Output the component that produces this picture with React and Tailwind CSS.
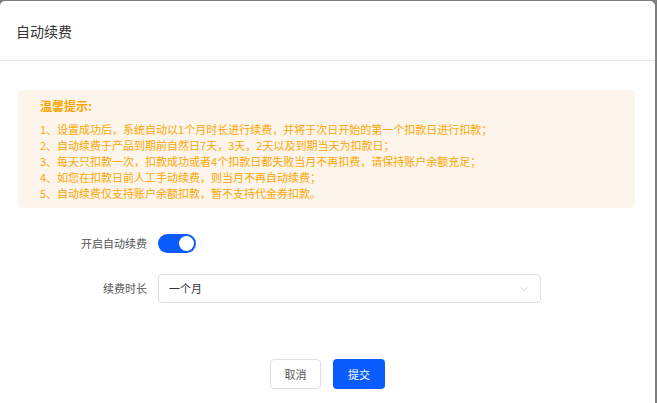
import React, { useState } from 'react';
import { ChevronDown } from 'lucide-react';

const tips = [
  '1、设置成功后，系统自动以1个月时长进行续费，并将于次日开始的第一个扣款日进行扣款；',
  '2、自动续费于产品到期前自然日7天，3天，2天以及到期当天为扣款日；',
  '3、每天只扣款一次，扣款成功或者4个扣款日都失败当月不再扣费，请保持账户余额充足；',
  '4、如您在扣款日前人工手动续费，则当月不再自动续费；',
  '5、自动续费仅支持账户余额扣款，暂不支持代金券扣款。',
];

export default function App() {
  const [enabled, setEnabled] = useState(true);

  return (
    <div
      className="w-[657px] h-[403px] bg-[#7f7f7f] pt-px pr-[2px] flex overflow-hidden"
      style={{ fontFamily: '"Noto Sans CJK SC", "Noto Sans", sans-serif' }}
    >
      <div className="flex-1 bg-white rounded-t-[5px] flex flex-col">
        <div className="h-[60px] border-b border-[#e6e6e6] flex items-center px-4">
          <h2 className="text-[14px] text-[#333] leading-none">自动续费</h2>
        </div>

        <div className="mt-[29px] ml-[18px] mr-[20px] bg-[#fdf5eb] rounded-[4px] pl-[22px] pt-[8px] pb-[7px] text-[#fba604]">
          <div className="text-[12px] font-bold leading-[16px] mb-[7px]">温馨提示:</div>
          {tips.map((t, i) => (
            <p key={i} className="text-[11px] leading-[16px] whitespace-nowrap">{t}</p>
          ))}
        </div>

        <div className="mt-[25px] flex items-center h-[20px]">
          <div className="w-[147px] text-right text-[11px] text-[#555]">开启自动续费</div>
          <button
            onClick={() => setEnabled(!enabled)}
            className={`ml-[11px] w-[38px] h-[19px] rounded-full flex items-center px-[2px] ${enabled ? 'bg-[#0a5cff] justify-end' : 'bg-[#dcdfe6] justify-start'}`}
          >
            <span className="w-[15px] h-[15px] rounded-full bg-white block" />
          </button>
        </div>

        <div className="mt-[21px] flex items-center">
          <div className="w-[147px] text-right text-[11px] text-[#555]">续费时长</div>
          <div className="ml-[11px] w-[383px] h-[29px] border border-[#dcdfe6] rounded-[4px] flex items-center justify-between pl-[10px] pr-[10px]">
            <span className="text-[11px] text-[#333]">一个月</span>
            <ChevronDown className="w-[12px] h-[12px] text-[#c0c4cc]" strokeWidth={1.5} />
          </div>
        </div>

        <div className="mt-[56px] flex justify-center gap-[12px]">
          <button className="w-[51px] h-[30px] border border-[#dcdfe6] rounded-[4px] text-[11px] text-[#555] bg-white">取消</button>
          <button className="w-[52px] h-[30px] rounded-[4px] text-[11px] text-white bg-[#0a5cff]">提交</button>
        </div>
      </div>
    </div>
  );
}
